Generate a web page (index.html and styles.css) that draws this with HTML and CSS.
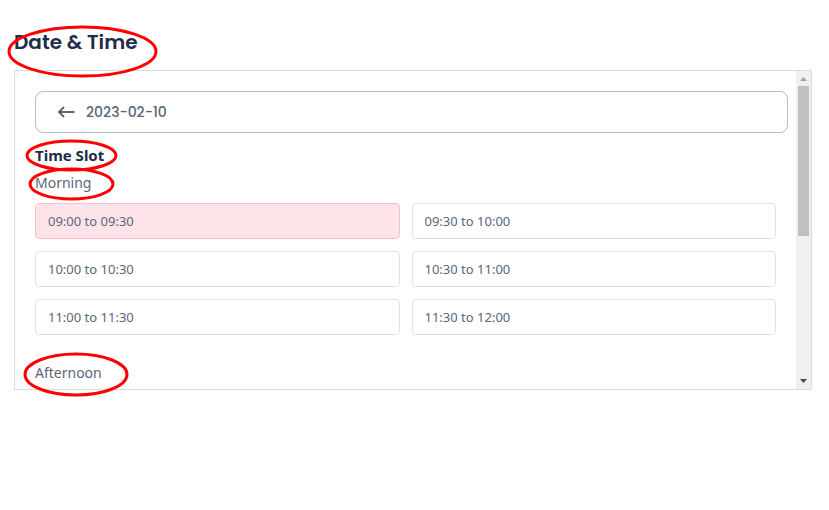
FILE: index.html
```html
<!DOCTYPE html>
<html lang="en">
<head>
<meta charset="utf-8">
<title>Date &amp; Time</title>
<link rel="stylesheet" href="styles.css">
</head>
<body>
<main class="page">
  <h1 class="title">Date &amp; Time</h1>
  <section class="panel">
    <div class="content">
      <button class="date" type="button">
        <svg class="arrow" viewBox="0 0 18 14" aria-hidden="true"><path d="M17.500 7H2M7 2L2 7l5 5"/></svg>
        <span>2023-02-10</span>
      </button>
      <h2 class="subtitle">Time Slot</h2>
      <h3 class="period">Morning</h3>
      <div class="slots">
        <button class="slot selected" type="button">09:00 to 09:30</button>
        <button class="slot" type="button">09:30 to 10:00</button>
        <button class="slot" type="button">10:00 to 10:30</button>
        <button class="slot" type="button">10:30 to 11:00</button>
        <button class="slot" type="button">11:00 to 11:30</button>
        <button class="slot" type="button">11:30 to 12:00</button>
      </div>
      <h3 class="period">Afternoon</h3>
    </div>
    <div class="scrollbar" aria-hidden="true">
      <svg class="step up" viewBox="0 0 15 15"><path d="M4 10h7L7.500 6z"/></svg>
      <div class="track"><div class="thumb"></div></div>
      <svg class="step down" viewBox="0 0 15 15"><path d="M4 5h7L7.500 9z"/></svg>
    </div>
  </section>
</main>
<svg class="marks" viewBox="0 0 200 400" aria-hidden="true">
  <ellipse cx="82.500" cy="51.500" rx="73.500" ry="24.500"/>
  <ellipse cx="71.500" cy="155.500" rx="44.500" ry="14.500"/>
  <ellipse cx="71.500" cy="184" rx="41.500" ry="15"/>
  <ellipse cx="76" cy="374.500" rx="51" ry="20.500"/>
</svg>
</body>
</html>
```
FILE: styles.css
```css
* {
  box-sizing: border-box;
}

body {
  margin: 0;
  background: #fff;
  color: #5a6679;
  font-family: "Noto Sans", sans-serif;
}

.page {
  padding: 26px 17px 0 14px;
}

.title {
  margin: 0 0 12px;
  color: #1e2c47;
  font: 600 20px/32px Poppins, Inter, sans-serif;
}

.panel {
  display: flex;
  border: 1px solid #dcdcdc;
}

.content {
  flex: 1;
  padding: 20px 8px 2px 20px;
}

.date {
  display: flex;
  align-items: center;
  gap: 11px;
  width: 100%;
  height: 42px;
  padding: 0 21px;
  border: 1px solid #b4bdd3;
  border-radius: 8px;
  background: #fff;
  color: #5a6679;
  font: 500 14px/24px Poppins, Inter, sans-serif;
}

.arrow {
  width: 18px;
  height: 14px;
  fill: none;
  stroke: #5a6679;
  stroke-width: 2;
}

.subtitle {
  margin: 8px 0 0;
  color: #1e2c47;
  font-size: 15px;
  font-weight: 700;
  line-height: 28px;
}

.period {
  margin: 0;
  font-size: 14px;
  font-weight: 400;
  line-height: 28px;
}

.slots {
  display: grid;
  grid-template-columns: 1fr 1fr;
  gap: 12px;
  margin: 6px 12px 24px 0;
}

.slot {
  height: 36px;
  padding: 0 12px;
  border: 1px solid #dbe3f3;
  border-radius: 4px;
  background: #fff;
  color: #5a6679;
  font: 400 13px/20px "Noto Sans", sans-serif;
  text-align: left;
}

.selected {
  border-color: #f9c0cb;
  background: #fee4e8;
}

.scrollbar {
  display: flex;
  flex-direction: column;
  width: 15px;
  background: #f0f0f0;
}

.step {
  width: 15px;
  height: 15px;
}

.up {
  fill: #a0a0a0;
}

.down {
  fill: #484848;
}

.track {
  flex: 1;
  padding: 0 2px;
}

.thumb {
  height: 52%;
  background: #c0c0c0;
}

.marks {
  position: absolute;
  top: 0;
  left: 0;
  width: 200px;
  height: 400px;
  fill: none;
  stroke: #f00;
  stroke-width: 3;
  pointer-events: none;
}
```
